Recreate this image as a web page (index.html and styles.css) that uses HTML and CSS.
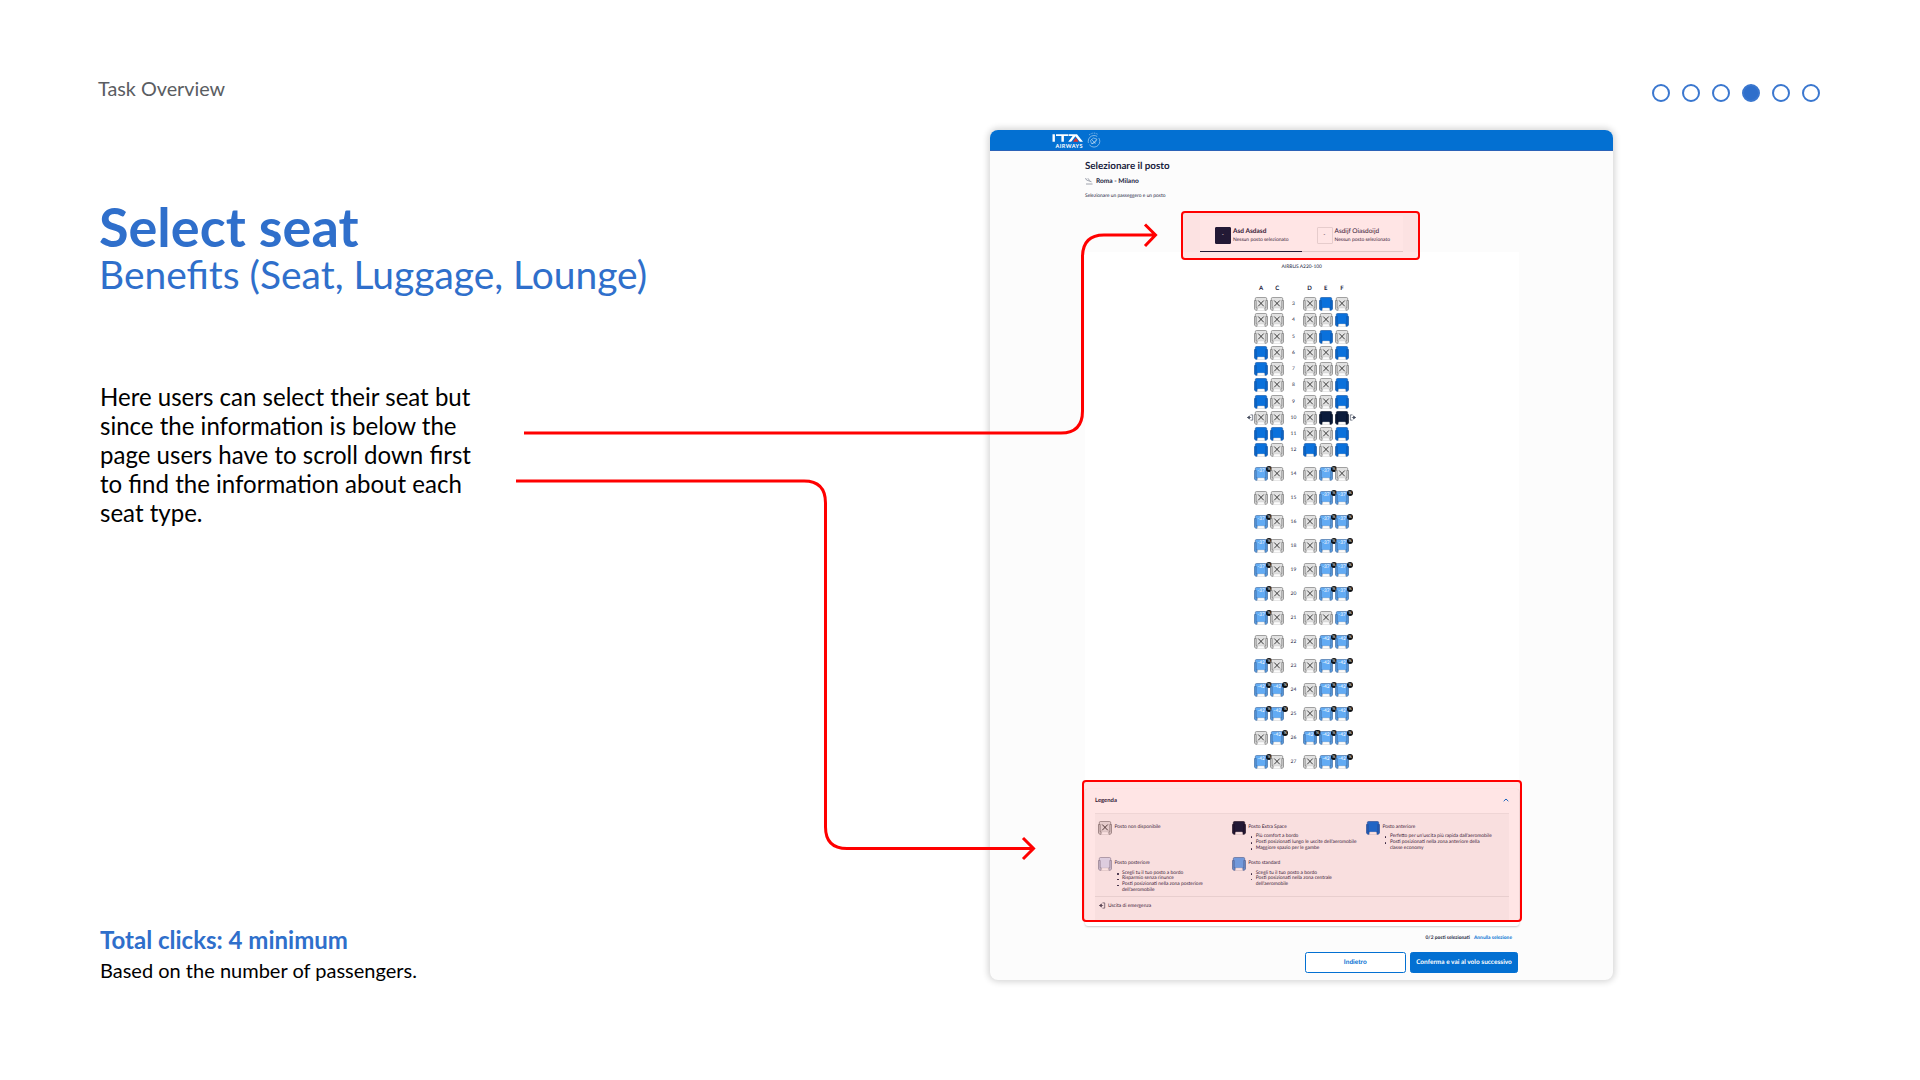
FILE: index.html
```html
<!DOCTYPE html>
<html lang="en">
<head>
<meta charset="utf-8">
<title>Task Overview</title>
<link rel="stylesheet" href="styles.css">
</head>
<body>
<svg class="defs" aria-hidden="true">
  <symbol id="seat" viewBox="0 0 14 14">
    <path class="back" d="M2.500 .5h9a1.200 1.200 0 0 1 1.200 1.200v9.800H1.300V1.700A1.200 1.200 0 0 1 2.500 .5z"/>
    <path class="arm" d="M.5 3.500h1.700v7.300h1v2.500H1.600L.5 12zM13.500 3.500h-1.700v7.300h-1v2.500h1.600l1.100-1.300z"/>
    <path class="base" d="M3.600 11h6.800v2.400H3.600z"/>
  </symbol>
  <symbol id="cross" viewBox="0 0 14 14"><path d="M4.200 3.500l5.600 5.800M9.800 3.500L4.200 9.300"/></symbol>
  <symbol id="exit" viewBox="0 0 8 8"><path d="M4 1h2.500v6H4"/><path d="M.3 4h4.500M2.800 2.200L.6 4l2.200 1.800z" fill="currentColor"/></symbol>
</svg>
<div class="slide">
  <section class="notes">
    <p class="eyebrow">Task Overview</p>
    <h1>Select seat</h1>
    <h2>Benefits (Seat, Luggage, Lounge)</h2>
    <p class="body">Here users can select their seat but<br>since the information is below the<br>page users have to scroll down first<br>to find the information about each<br>seat type.</p>
    <p class="total">Total clicks: 4 minimum</p>
    <p class="based">Based on the number of passengers.</p>
  </section>

  <main class="shot">
    <header class="bar">
      <svg class="logo" viewBox="0 0 50 19">
        <path fill="#fff" d="M1.500 4.300h2.400v7.500H1.500zM5 4.300h12.500v1.800h-4.600v5.700h-2.500V6.100H5zM18 4.300h8l6 7.500h-3.200L24.400 6.300l-4.200 5.500h-3l4.400-5.700H18z"/>
        <path d="M25 7.800l-3 4h5.400z" fill="#e0322f"/>
        <text x="4.500" y="17.600" textLength="27">AIRWAYS</text>
        <g fill="none" stroke="#cfe4f7" stroke-width=".6"><circle cx="43" cy="11.300" r="5.800" stroke-dasharray="14 2"/><path d="M39.500 10.500l3-2.500 3.500 1.200-2 3.500-3.500 1zM41 14l4.500-4M40.500 9.500l4 4"/><path d="M38 5q4.500-3.500 9-.5" stroke-dasharray="1 .8"/></g>
      </svg>
    </header>
    <div class="intro">
      <h3>Selezionare il posto</h3>
      <p class="route"><svg viewBox="0 0 8 8"><path d="M.5 1l1 2 5 1.800M2.800 1.200l2 2.500M1 7h6.500"/></svg><b>Roma - Milano</b></p>
      <p class="hint">Selezionare un passeggero e un posto</p>
    </div>
    <div class="tabs">
      <div class="tab on"><i>-</i><div><b>Asd Asdasd</b><span>Nessun posto selezionato</span></div></div>
      <div class="tab"><i>-</i><div><b>Asdijf Oiasdoijd</b><span>Nessun posto selezionato</span></div></div>
    </div>
    <div class="cabin">
      <p class="plane">AIRBUS A220-100</p>
      <div class="row letters"><b>A</b><b>C</b><b></b><b>D</b><b>E</b><b>F</b></div>
      <div id="seats"></div>
    </div>
    <section class="legend">
      <div class="legend-head"><b>Legenda</b><svg viewBox="0 0 6 4"><path d="M.7 3.200L3 1l2.300 2.200"/></svg></div>
      <div class="legend-grid">
        <div class="item"><svg class="seat none"><use href="#seat"/><use href="#cross"/></svg><div><p>Posto non disponibile</p></div></div>
        <div class="item"><svg class="seat extra"><use href="#seat"/></svg><div><p>Posto Extra Space</p><ul><li>Più comfort a bordo</li><li>Posti posizionati lungo le uscite dell’aeromobile</li><li>Maggiore spazio per le gambe</li></ul></div></div>
        <div class="item"><svg class="seat front"><use href="#seat"/></svg><div><p>Posto anteriore</p><ul><li>Perfetto per un’uscita più rapida dall’aeromobile</li><li>Posti posizionati nella zona anteriore della<br>classe economy</li></ul></div></div>
        <div class="item"><svg class="seat rear"><use href="#seat"/></svg><div><p>Posto posteriore</p><ul><li>Scegli tu il tuo posto a bordo</li><li>Risparmio senza rinunce</li><li>Posti posizionati nella zona posteriore<br>dell’aeromobile</li></ul></div></div>
        <div class="item"><svg class="seat std"><use href="#seat"/></svg><div><p>Posto standard</p><ul><li>Scegli tu il tuo posto a bordo</li><li>Posti posizionati nella zona centrale<br>dell’aeromobile</li></ul></div></div>
      </div>
      <div class="legend-exit"><svg class="exit"><use href="#exit"/></svg><span>Uscita di emergenza</span></div>
    </section>
    <p class="count"><b>0/2 posti selezionati</b><a>Annulla selezione</a></p>
    <div class="buttons"><button>Indietro</button><button class="primary">Conferma e vai al volo successivo</button></div>
  </main>

  <nav class="dots"><i></i><i></i><i></i><i class="on"></i><i></i><i></i></nav>

  <div class="mark mark-tabs"></div>
  <div class="mark mark-legend"></div>
  <svg class="arrows" viewBox="0 0 1920 1080">
    <path d="M524 433H1061Q1082.500 433 1082.500 411V257Q1082.500 235 1104 235H1155M1145 224.500L1155.500 235L1145 246"/>
    <path d="M516 481H804Q825.500 481 825.500 503V827Q825.500 848.500 847 848.500H1033M1023 838L1033.500 848.500L1023 859"/>
  </svg>
</div>
<script src="seats.js"></script>
</body>
</html>
```
FILE: styles.css
```css
* { box-sizing: border-box; margin: 0; padding: 0; }
body { background: #fff; font-family: Lato, sans-serif; color: #000; }
.defs { display: none; }
.slide { position: relative; width: 1920px; height: 1080px; overflow: hidden; display: flex; }

.notes { width: 990px; padding-left: 100px; display: flex; flex-direction: column; white-space: nowrap; flex: none; }
.eyebrow { margin: 75px 0 0 -2px; font-size: 19.800px; line-height: 26px; color: #5a5d62; }
h1 { margin: 97px 0 0 -1px; font-size: 54px; line-height: 58px; font-weight: 700; color: #2f6fcb; }
h2 { margin: -1px 0 0 -1px; font-size: 38.950px; line-height: 38px; font-weight: 400; color: #2f6fcb; }
.body { margin-top: 89px; font-size: 24.050px; line-height: 29px; }
.total { margin-top: 398px; font-size: 24px; line-height: 30px; font-weight: 700; color: #2f6fcb; }
.based { margin-top: 2px; font-size: 20px; line-height: 26px; }

.shot { width: 623px; height: 850px; margin-top: 130px; flex: none; background: #fcfcfc; border-radius: 8px; box-shadow: 0 0 6px 2px rgba(0,0,0,.16); overflow: hidden; color: #1a2340; white-space: nowrap; text-rendering: geometricPrecision; }
.bar { height: 20.500px; background: #0370d2; border-bottom: 1px solid #2a62b8; padding-left: 61px; }
.logo { display: block; width: 50px; height: 19px; }
.logo text { fill: #fff; font-size: 5.500px; font-weight: 700; }
.intro { padding-left: 95px; height: 65.500px; padding-top: 9.500px; }
h3 { font-size: 9.800px; line-height: 13px; }
.route { display: flex; align-items: center; margin-top: 2.500px; height: 10px; font-size: 6.600px; }
.route svg { width: 8px; height: 8px; margin-right: 3px; fill: none; stroke: #8a8f9c; stroke-width: .8; }
.hint { margin-top: 6.500px; font-size: 4.900px; line-height: 8px; }
.tabs { width: 203px; height: 35.500px; margin-left: 210px; display: grid; grid-template-columns: 1fr 1fr; background: #fff; }
.tab { display: flex; padding: 10.500px 0 0 15px; border-bottom: 1px solid #ddd; }
.tab.on { border-color: #0b1c3c; }
.tab i { width: 16px; height: 17px; border: 1px solid #e4e4e4; border-radius: 1px; font-size: 5px; line-height: 15px; text-align: center; margin-right: 2px; }
.tab.on i { background: #0b1c3c; color: #fff; border-color: #0b1c3c; }
.tab b, .tab span { display: block; }
.tab b { font-size: 6.500px; line-height: 8.500px; margin-top: 1px; }
.tab:not(.on) b { font-weight: 400; }
.tab span { font-size: 4.970px; line-height: 7px; margin-top: .6px; }

.cabin { width: 433.500px; height: 537.500px; margin-left: 95px; background: #fff; }
.plane { padding-top: 11px; text-align: center; font-size: 4.900px; line-height: 8px; height: 28.500px; }
.row { width: 97.200px; margin-left: 168px; display: grid; grid-template-columns: repeat(6, 16.200px); justify-items: center; align-items: center; height: 16.250px; }
.row.letters { font-size: 6px; height: 16px; padding-top: .8px; }
.row.tall { height: 24px; }
.row.first { margin-top: 3.800px; }
.row > span { font-size: 5px; }
.cell { position: relative; width: 14px; height: 14px; }
.seat { display: block; width: 14px; height: 14px; stroke-width: .6; flex: none; }
.none { --back: #e2e2e2; --line: #696969; --arm: #d4d4d4; }
.front { --back: #0a71dc; --line: #10509f; --arm: #0a68cc; }
.extra { --back: #0b1c3c; --line: #050d20; --arm: #0b1c3c; }
.std { --back: #62abf4; --line: #3b659a; --arm: #579be0; }
.rear { --back: #dae4f8; --line: #7a8094; --arm: #c5cde2; }
.back { fill: var(--back); stroke: var(--line); }
.arm { fill: var(--arm); stroke: var(--line); }
.base { fill: #fff; stroke: #bbb; stroke-width: .4; }
#cross path { stroke: #222; stroke-width: .85; }
.price { position: absolute; left: 0; top: 1px; width: 14px; font-size: 4.800px; line-height: 6px; color: #fff; text-align: center; }
.badge { position: absolute; right: -4.200px; top: -1.500px; width: 6.400px; height: 6.400px; border-radius: 50%; background: #0d0f12; color: #fff; font-size: 4px; line-height: 6.400px; text-align: center; }
.exit { width: 7px; height: 7px; fill: none; color: #444a5c; stroke: #444a5c; stroke-width: .8; }
.cell .exit { position: absolute; left: -7px; top: 3.500px; }
.cell .exit.right { left: 14px; transform: scaleX(-1); }

.legend { width: 433.500px; height: 137px; margin-left: 95px; background: #fff; border-radius: 3px; box-shadow: 0 1px 2px rgba(0,0,0,.2); padding: 0 10px; }
.legend-head { height: 24px; padding-bottom: 1.500px; display: flex; align-items: center; justify-content: space-between; font-size: 5.900px; }
.legend-head svg { width: 6px; height: 4px; fill: none; stroke: #0370d2; stroke-width: 1; }
.legend-grid { height: 83.500px; background: #f9f9f9; border-top: 1px solid #eee; border-bottom: 1px solid #e6e6e6; padding: 6.500px 0 0 3px; display: grid; grid-template-columns: 133.700px 134.200px 1fr; grid-template-rows: 36.500px 1fr; font-size: 4.900px; line-height: 5.850px; }
.item { display: flex; }
.item > div { margin: 4.200px 0 0 2.500px; }
.item ul { list-style: none; margin: 3.600px 0 0 7.500px; }
.item li { position: relative; }
.item li::before { content: ""; position: absolute; left: -5px; top: 2.300px; width: 1.600px; height: 1.600px; border-radius: 50%; background: currentColor; }
.legend-exit { height: 23.500px; background: #f9f9f9; padding: 0 0 5px 4px; display: flex; align-items: center; gap: 2px; font-size: 4.900px; }
.count { height: 26px; padding: 8px 101px 0 0; display: flex; justify-content: flex-end; gap: 4px; font-size: 4.900px; line-height: 8px; }
.count a { color: #0370d2; font-weight: 700; }
.buttons { display: flex; justify-content: flex-end; gap: 4px; padding-right: 95px; }
button { width: 101.500px; height: 20.500px; padding-top: 1px; border: 1px solid #0370d2; border-radius: 2.500px; background: #fff; color: #0370d2; font: 700 6.500px Lato, sans-serif; white-space: nowrap; text-rendering: geometricPrecision; }
button.primary { width: 108px; background: #0370d2; color: #fff; }

.dots { position: absolute; left: 1652px; top: 84px; display: flex; gap: 12px; }
.dots i { width: 18px; height: 18px; border: 2px solid #3a77cf; border-radius: 50%; }
.dots .on { background: #2f6fcb; }
.mark { position: absolute; border: 2px solid #f00; border-radius: 4px; background: rgba(255,0,0,.1); }
.mark-tabs { left: 1181px; top: 211px; width: 239px; height: 49px; }
.mark-legend { left: 1082px; top: 780px; width: 440px; height: 142px; }
.arrows { position: absolute; left: 0; top: 0; width: 1920px; height: 1080px; fill: none; stroke: #f00; stroke-width: 3; }
```
FILE: seats.js
```js
// x = unavailable, f = front, e = extra space, s = standard
const rows = [
  [3, "xxxfx"], [4, "xxxxf"], [5, "xxxfx"], [6, "fxxxf"], [7, "fxxxx"],
  [8, "fxxxf"], [9, "fxxxf"], [10, "xxxee"], [11, "ffxxf"], [12, "fxfxf"],
  [14, "sxxsx"], [15, "xxxss"], [16, "sxxss"], [18, "sxxss"], [19, "sxxss"],
  [20, "sxxss"], [21, "sxxxs"], [22, "xxxss"], [23, "sxxss"], [24, "ssxss"],
  [25, "ssxss"], [26, "xssss"], [27, "sxxss"]
];
const kinds = { x: "none", f: "front", e: "extra", s: "std" };

function cell(kind, row, index) {
  let html = `<svg class="seat ${kinds[kind]}"><use href="#seat"/>${kind === "x" ? '<use href="#cross"/>' : ""}</svg>`;
  if (kind === "s") html += `<span class="price">${row < 22 ? "-37" : "-42"}</span><span class="badge">%</span>`;
  if (row === 10 && index === 0) html += '<svg class="exit"><use href="#exit"/></svg>';
  if (row === 10 && index === 4) html += '<svg class="exit right"><use href="#exit"/></svg>';
  return `<div class="cell">${html}</div>`;
}

document.getElementById("seats").innerHTML = rows.map(([n, seats]) => {
  const cells = [...seats].map((k, i) => cell(k, n, i));
  cells.splice(2, 0, `<span>${n}</span>`);
  return `<div class="row${n > 12 ? " tall" : ""}${n === 14 ? " first" : ""}">${cells.join("")}</div>`;
}).join("");
```
